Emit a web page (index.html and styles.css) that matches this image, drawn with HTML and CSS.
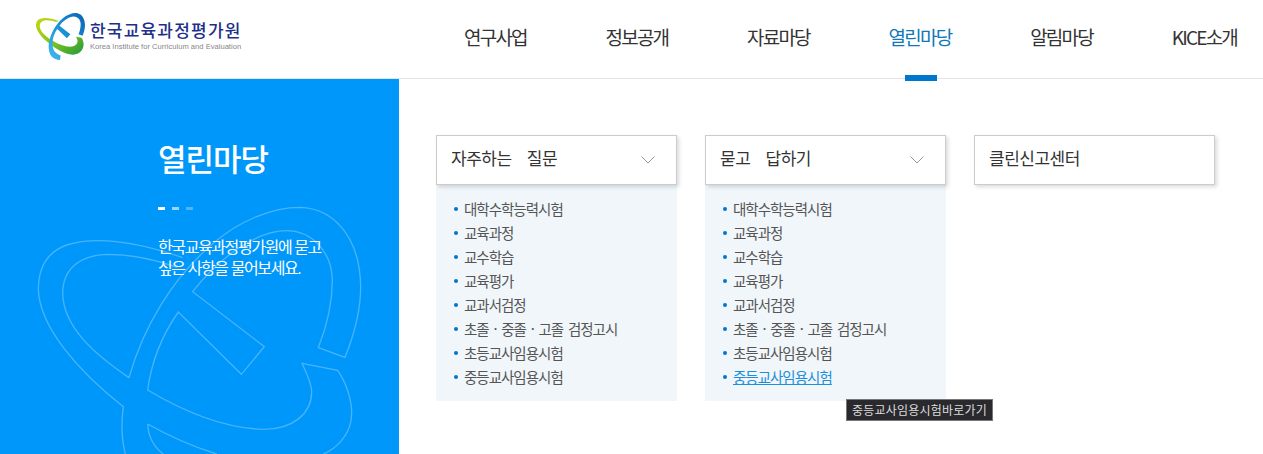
FILE: index.html
```html
<!DOCTYPE html>
<html lang="ko">
<head>
	<meta charset="UTF-8">
	<title>열린마당</title>
	<link rel="stylesheet" href="styles.css">
</head>
<body>
	<header class="top">
		<a href="#" class="logo">
			<svg class="logo-mark" width="49" height="47" viewBox="115 262 967 928">
				<defs>
					<linearGradient id="lg" x1="0" y1="0" x2="1" y2="1">
						<stop offset="0" stop-color="#c4d80c"/>
						<stop offset=".55" stop-color="#7cc220"/>
						<stop offset="1" stop-color="#1f9a3c"/>
					</linearGradient>
					<linearGradient id="lb" x1="1" y1="0" x2="0" y2="1">
						<stop offset="0" stop-color="#0d62b4"/>
						<stop offset=".6" stop-color="#1c9bdc"/>
						<stop offset="1" stop-color="#45bdec"/>
					</linearGradient>
				</defs>
				<path fill="url(#lg)" d="M548 413C400 360 280 350 200 375C130 400 115 460 115 510C120 620 230 750 370 860C500 960 680 1090 850 1085C970 1080 1055 990 1055 880C1055 840 1040 790 1013 751L906 730C920 760 935 790 935 815C935 880 880 928 790 928C680 925 560 880 443 810L387 773C280 700 190 620 188 520C188 440 250 405 320 403C400 403 470 420 532 442Z"/>
				<path fill="url(#lb)" d="M387 773C430 620 520 470 640 370C720 300 820 262 900 262C1000 265 1080 350 1082 500C1082 580 1060 650 1035 712L955 683C980 620 997 550 997 480C995 390 930 332 860 332C770 332 660 410 578 515L793 680L724 763L535 576C490 640 455 720 443 810L443 912C450 1000 500 1060 600 1100L590 1190C450 1190 370 1100 365 950C362 920 365 890 370 860Z"/>
			</svg>
			<span class="logo-text">
				<strong>한국교육과정평가원</strong>
				<small>Korea Institute for Curriculum and Evaluation</small>
			</span>
		</a>
		<nav class="gnb">
			<a href="#">연구사업</a>
			<a href="#">정보공개</a>
			<a href="#">자료마당</a>
			<a href="#" class="on">열린마당</a>
			<a href="#">알림마당</a>
			<a href="#">KICE소개</a>
		</nav>
	</header>

	<div class="wrap">
		<aside class="side">
			<svg class="side-bg" width="399" height="334" viewBox="0 0 1197 1002">
				<path d="M548 413C400 360 280 350 200 375C130 400 115 460 115 510C120 620 230 750 370 860C362 920 365 960 376 1002"/>
				<path d="M387 773C280 700 190 620 188 520C188 440 250 405 320 403C400 403 470 420 532 442"/>
				<path d="M387 773C430 620 520 470 640 370C720 300 820 262 900 262C1000 265 1080 350 1082 500C1082 580 1060 650 1035 712L955 683C980 620 997 550 997 480C995 390 930 332 860 332C770 332 660 410 578 515L793 680L724 763L535 576C490 640 455 720 443 810C560 880 680 925 790 928C880 928 935 880 935 815C935 790 920 760 906 730L1013 751C1040 790 1055 840 1055 880C1055 950 1000 990 970 1002"/>
				<path d="M443 912C445 950 460 980 490 1002M443 912C510 950 580 980 650 1002"/>
			</svg>
			<h1 class="side-title">열린마당</h1>
			<div class="dots"><i></i><i></i><i></i></div>
			<p class="side-desc">한국교육과정평가원에 묻고<br>싶은 사항을 물어보세요.</p>
		</aside>

		<main class="cards">
			<section class="card">
				<a href="#" class="card-head">자주하는 질문
					<svg class="chev" width="14" height="8" viewBox="0 0 14 8"><path d="M.5.5L7 7L13.500.5"/></svg>
				</a>
				<ul class="card-list">
					<li><a href="#">대학수학능력시험</a></li>
					<li><a href="#">교육과정</a></li>
					<li><a href="#">교수학습</a></li>
					<li><a href="#">교육평가</a></li>
					<li><a href="#">교과서검정</a></li>
					<li><a href="#">초졸 · 중졸 · 고졸 검정고시</a></li>
					<li><a href="#">초등교사임용시험</a></li>
					<li><a href="#">중등교사임용시험</a></li>
				</ul>
			</section>
			<section class="card">
				<a href="#" class="card-head">묻고 답하기
					<svg class="chev" width="14" height="8" viewBox="0 0 14 8"><path d="M.5.5L7 7L13.500.5"/></svg>
				</a>
				<ul class="card-list">
					<li><a href="#">대학수학능력시험</a></li>
					<li><a href="#">교육과정</a></li>
					<li><a href="#">교수학습</a></li>
					<li><a href="#">교육평가</a></li>
					<li><a href="#">교과서검정</a></li>
					<li><a href="#">초졸 · 중졸 · 고졸 검정고시</a></li>
					<li><a href="#">초등교사임용시험</a></li>
					<li class="hover"><a href="#">중등교사임용시험</a><span class="tip">중등교사임용시험바로가기</span></li>
				</ul>
			</section>
			<section class="card">
				<a href="#" class="card-head">클린신고센터</a>
			</section>
		</main>
	</div>
</body>
</html>
```
FILE: styles.css
```css
* {
	box-sizing: border-box;
}
html, body {
	height: 100%;
}
body {
	margin: 0;
	overflow: hidden;
	background: #fff;
	color: #333;
	font-family: "Noto Sans CJK KR", "Noto Sans", sans-serif;
}
a {
	color: inherit;
	text-decoration: none;
}

/* 상단 */
.top {
	display: flex;
	justify-content: space-between;
	height: 79px;
	padding-right: 26px;
	border-bottom: 1px solid #e4e4e4;
}
.logo {
	display: flex;
	align-items: flex-start;
	padding: 13px 0 0 36px;
}
.logo-text {
	display: flex;
	flex-direction: column;
	margin: 7px 0 0 5px;
}
.logo-text strong {
	color: #1d2f8a;
	font-size: 17px;
	font-weight: 500;
	line-height: 20px;
	letter-spacing: 1.2px;
}
.logo-text small {
	color: #888;
	font-family: "Liberation Sans", sans-serif;
	font-size: 7.6px;
	line-height: 13px;
}
.gnb {
	display: flex;
	gap: 78.8px;
}
.gnb a {
	position: relative;
	padding-top: 23px;
	font-size: 19px;
	line-height: 28px;
	letter-spacing: -1.8px;
	color: #333;
}
.gnb a.on {
	color: #0f78b8;
}
.gnb a.on::after {
	content: "";
	position: absolute;
	left: 16px;
	top: 75px;
	width: 32px;
	height: 6px;
	background: #0077cc;
}

/* 본문 */
.wrap {
	display: flex;
	height: 375px;
}
.side {
	position: relative;
	flex: 0 0 399px;
	padding: 57px 0 0 158px;
	overflow: hidden;
	background: #0097fa;
	color: #fff;
}
.side-bg {
	position: absolute;
	left: 0;
	top: 41px;
}
.side-bg path {
	fill: none;
	stroke: rgba(255, 255, 255, .28);
	stroke-width: 4;
}
.side-title {
	position: relative;
	margin: 0;
	font-size: 31px;
	font-weight: 500;
	line-height: 44px;
	letter-spacing: -1px;
}
.dots {
	display: flex;
	gap: 7px;
	margin-top: 27px;
}
.dots i {
	width: 7px;
	height: 3px;
	background: #fff;
}
.dots i:nth-child(2) {
	opacity: .6;
}
.dots i:nth-child(3) {
	opacity: .3;
}
.side-desc {
	position: relative;
	margin: 27px 0 0;
	font-family: "Liberation Sans", "Noto Sans CJK KR", sans-serif;
	font-size: 16px;
	line-height: 21px;
	letter-spacing: -1.4px;
}

.cards {
	display: flex;
	align-items: flex-start;
	gap: 28px;
	padding: 56px 0 0 37px;
}
.card {
	width: 241px;
}
.card-head {
	position: relative;
	z-index: 1;
	display: flex;
	align-items: center;
	justify-content: space-between;
	height: 50px;
	padding: 0 21px 5px 14px;
	border: 1px solid #ccc;
	background: #fff;
	box-shadow: 2px 2px 4px rgba(0, 0, 0, .15);
	font-size: 17px;
	letter-spacing: -.5px;
	word-spacing: 11px;
	color: #333;
}
.chev {
	margin-top: 5px;
}
.chev path {
	fill: none;
	stroke: #999;
}
.card-list {
	margin: 0;
	padding: 12px 0 12px 28px;
	list-style: none;
	background: #f0f6fa;
	font-size: 14.5px;
	color: #555;
	letter-spacing: -1px;
	word-spacing: 1.7px;
}
.card-list li {
	position: relative;
	height: 24px;
	line-height: 24px;
}
.card-list li::before {
	content: "";
	position: absolute;
	left: -10px;
	top: 10px;
	width: 4px;
	height: 4px;
	border-radius: 50%;
	background: #0077cc;
}
.card-list li.hover a {
	color: #1b8fdc;
	text-decoration: underline;
}
.tip {
	position: absolute;
	left: 113px;
	top: 34px;
	z-index: 2;
	width: 147px;
	height: 22px;
	border: 1px solid #777;
	background: #2a2a2e;
	color: #ddd;
	font-size: 12px;
	line-height: 20px;
	letter-spacing: .2px;
	word-spacing: 0;
	text-align: center;
	white-space: nowrap;
}
```
